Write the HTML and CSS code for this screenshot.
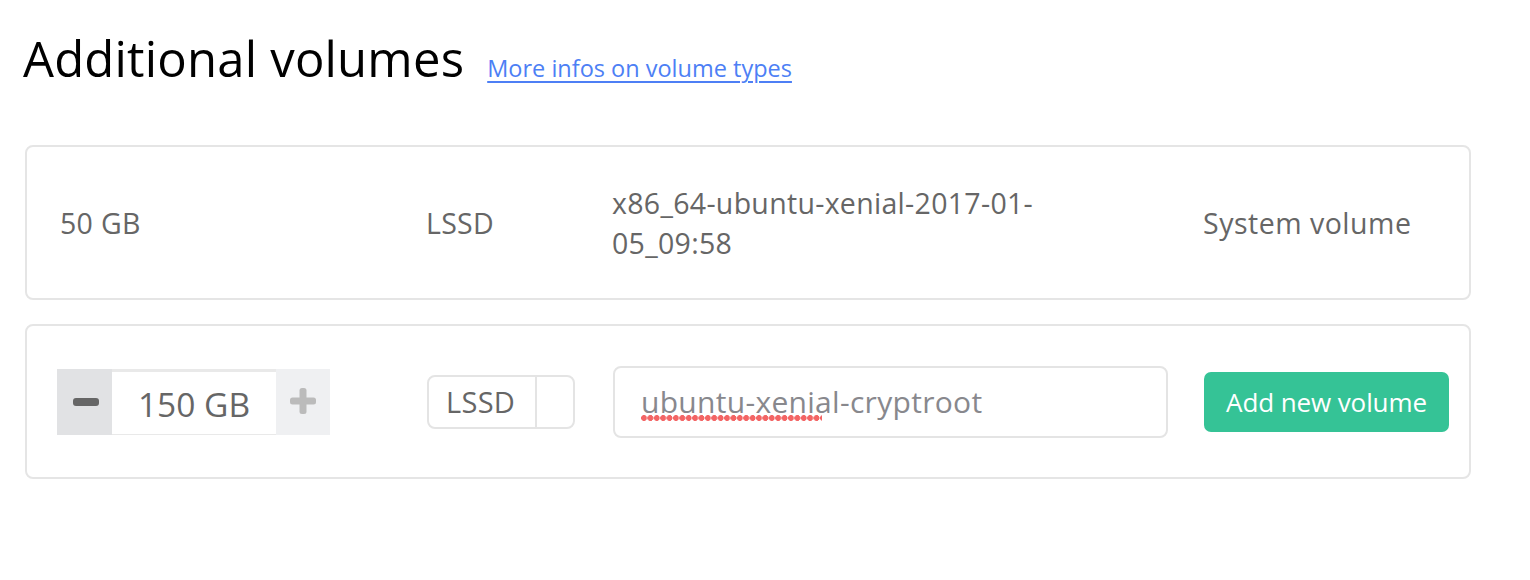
FILE: index.html
```html
<!DOCTYPE html>
<html lang="en">
<head>
<meta charset="utf-8">
<title>Additional volumes</title>
<link rel="stylesheet" href="styles.css">
</head>
<body>
<div class="page">
  <header class="header">
    <h1 class="title">Additional volumes</h1>
    <a class="link" href="#">More infos on volume types</a>
  </header>

  <div class="card">
    <div class="cell cell-size">50 GB</div>
    <div class="cell cell-type">LSSD</div>
    <div class="cell cell-name">x86_64-ubuntu-xenial-2017-01-05_09:58</div>
    <div class="cell cell-role">System volume</div>
  </div>

  <div class="card">
    <div class="cell cell-size">
      <div class="stepper">
        <button class="step step-minus" type="button" aria-label="Decrease">
          <svg width="26" height="8" viewBox="0 0 26 8"><rect x="0" y="0" width="26" height="8" rx="3" fill="#666"/></svg>
        </button>
        <div class="step-value">150 GB</div>
        <button class="step step-plus" type="button" aria-label="Increase">
          <svg width="26" height="26" viewBox="0 0 26 26"><rect x="0" y="9.5" width="26" height="7" rx="2.5" fill="#bbb"/><rect x="9.5" y="0" width="7" height="26" rx="2.5" fill="#bbb"/></svg>
        </button>
      </div>
    </div>
    <div class="cell cell-type">
      <div class="select">
        <span class="select-label">LSSD</span>
        <span class="select-caret"></span>
      </div>
    </div>
    <div class="cell cell-name">
      <div class="text-input"><span class="misspelled">ubuntu-xenial</span><span>-cryptroot</span></div>
    </div>
    <div class="cell cell-role">
      <button class="btn-add" type="button">Add new volume</button>
    </div>
  </div>
</div>
</body>
</html>
```

FILE: styles.css
```css
html, body {
  margin: 0;
  padding: 0;
  background: #ffffff;
}

body {
  font-family: "Open Sans", "Noto Sans", "DejaVu Sans", sans-serif;
  color: #666666;
}

.page {
  padding: 26px 0 0 25px;
  width: 1446px;
}

.header {
  display: flex;
  align-items: baseline;
  gap: 23px;
  height: 95px;
}

.title {
  margin: 0;
  font-size: 49px;
  font-weight: 400;
  color: #000000;
  letter-spacing: 0.2px;
  line-height: 64px;
  margin-left: -2px;
}

.link {
  font-size: 23.5px;
  color: #4d7ff5;
  text-decoration: underline;
  text-decoration-thickness: 2px;
  text-underline-offset: 4px;
}

.card {
  box-sizing: border-box;
  margin-top: 24px;
  height: 155px;
  border: 2px solid #e5e5e5;
  border-radius: 8px;
  display: grid;
  grid-template-columns: 366px 186px 591px 1fr;
  align-items: center;
  padding-left: 33px;
}

.card + .card {
  margin-top: 24px;
}

.cell {
  font-size: 28.5px;
  line-height: 40px;
  letter-spacing: 0.3px;
  color: #666666;
}

.cell-name {
  max-width: 470px;
}

.cell-role {
  letter-spacing: 0.5px;
}

/* stepper */
.stepper {
  display: flex;
  height: 66px;
  margin-left: -3px;
  width: 273px;
}

.step {
  border: 0;
  padding: 0;
  margin: 0;
  display: flex;
  align-items: center;
  justify-content: center;
  cursor: pointer;
}

.step-minus {
  width: 55px;
  background: #e1e2e4;
  padding-left: 2px;
}

.step-plus {
  width: 54px;
  background: #eff0f2;
  padding-bottom: 2px;
}

.step-value {
  box-sizing: border-box;
  width: 164px;
  border-top: 3px solid #e9e9e9;
  border-bottom: 1px solid #e9e9e9;
  background: #ffffff;
  display: flex;
  align-items: center;
  justify-content: center;
  font-size: 33.5px;
  letter-spacing: 0;
  color: #666666;
  padding-top: 2px;
}

/* select */
.select {
  box-sizing: border-box;
  display: flex;
  width: 148px;
  height: 54px;
  border: 2px solid #e4e4e4;
  border-radius: 8px;
  margin-left: 1px;
}

.select-label {
  box-sizing: border-box;
  width: 108px;
  border-right: 2px solid #e4e4e4;
  padding-left: 17px;
  display: flex;
  align-items: center;
  font-size: 29px;
  color: #666666;
}

.select-caret {
  flex: 1;
}

/* text input */
.text-input {
  box-sizing: border-box;
  width: 555px;
  height: 72px;
  border: 2px solid #e4e4e4;
  border-radius: 8px;
  margin-left: 1px;
  padding-left: 26px;
  display: flex;
  align-items: center;
  font-size: 30px;
  letter-spacing: 0.3px;
  color: #88888d;
  white-space: pre;
}

.misspelled {
  position: relative;
}

.misspelled::after {
  content: "";
  position: absolute;
  left: 0;
  right: 18px;
  bottom: 1px;
  height: 6px;
  background-image: radial-gradient(circle at 3px 3px, #f36565 2.7px, transparent 3.2px);
  background-size: 6.4px 6px;
  background-repeat: repeat-x;
}

/* button */
.btn-add {
  width: 245px;
  height: 60px;
  border: 0;
  border-radius: 7px;
  background: #35c396;
  color: #ffffff;
  font-family: "Open Sans", "Noto Sans", "DejaVu Sans", sans-serif;
  font-size: 26px;
  letter-spacing: -0.1px;
  cursor: pointer;
  padding: 0;
  margin-left: 1px;
}
```
